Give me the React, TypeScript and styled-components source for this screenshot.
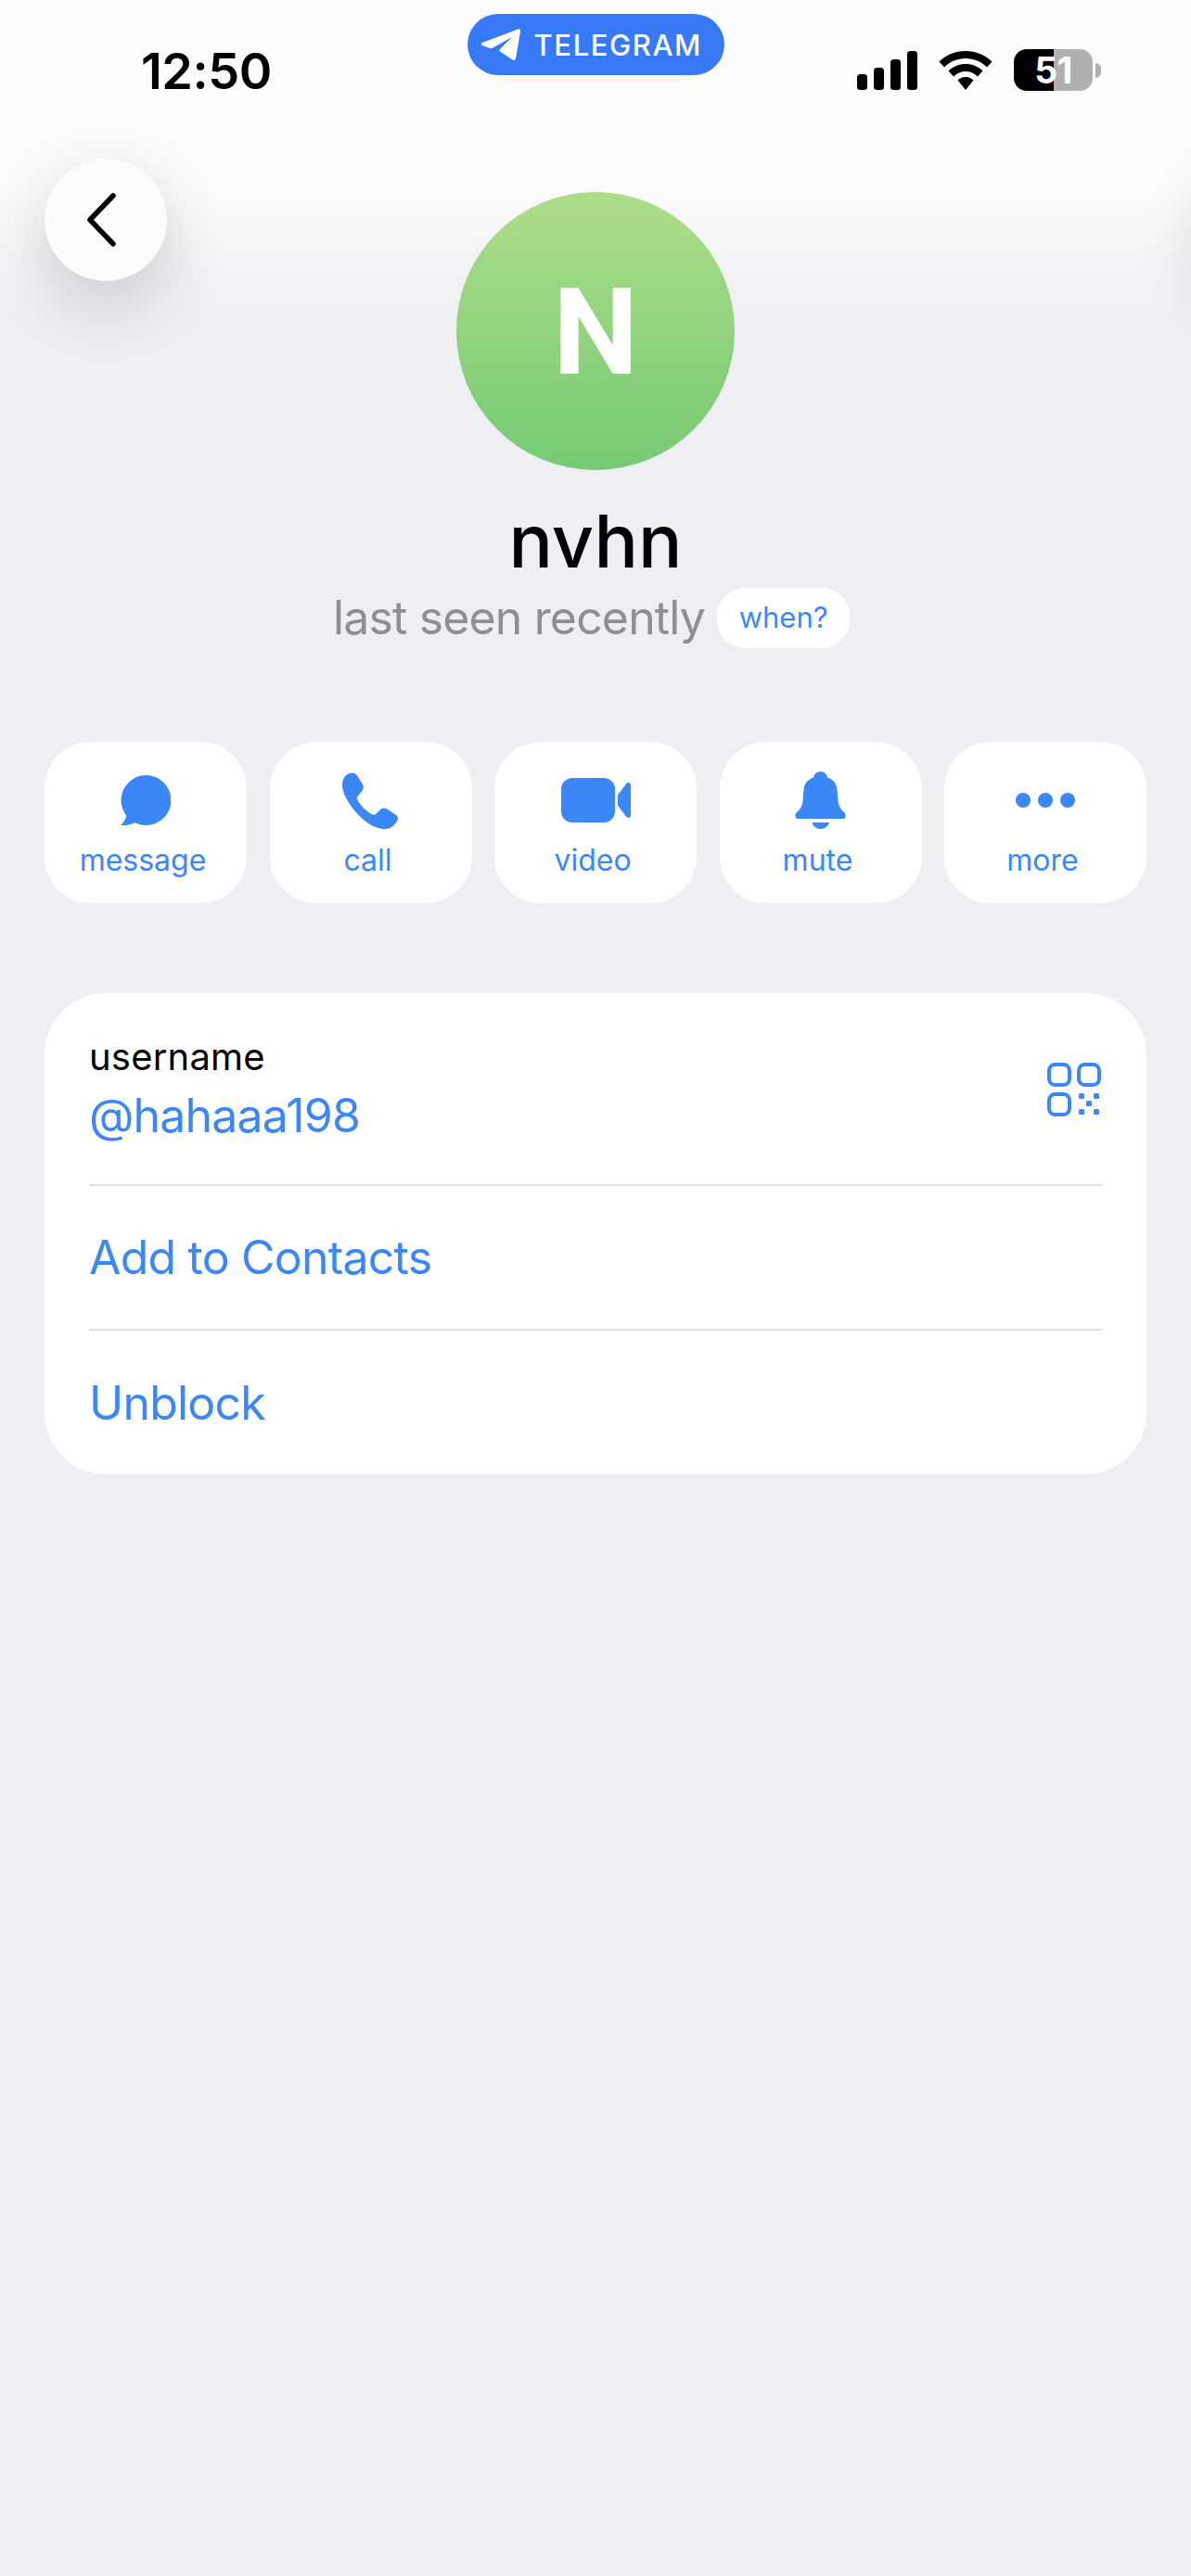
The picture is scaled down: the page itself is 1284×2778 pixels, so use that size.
import styled, { createGlobalStyle } from 'styled-components';

const BLUE = '#3b87f8';

const GlobalStyle = createGlobalStyle`
  html, body {
    margin: 0;
    padding: 0;
    background: #eeeef3;
    overflow: hidden;
  }
  * { box-sizing: border-box; }
`;

const Page = styled.div`
  position: relative;
  width: 1284px;
  height: 2778px;
  overflow: hidden;
  display: flex;
  flex-direction: column;
  align-items: center;
  font-family: 'Inter', 'Liberation Sans', sans-serif;
  background: linear-gradient(#fcfcfc 0, #fbfbfc 205px, #f5f5f8 270px, #eeeef3 340px);
`;

const StatusBar = styled.div`
  width: 100%;
  height: 207px;
  display: grid;
  grid-template-columns: 1fr auto 1fr;
  align-items: start;
`;

const Time = styled.div`
  padding: 45px 0 0 152px;
  font-size: 54px;
  line-height: 64px;
  font-weight: 600;
  letter-spacing: -0.5px;
  color: #000;
`;

const AppPill = styled.div`
  margin-top: 15px;
  width: 277px;
  height: 66px;
  border-radius: 33px;
  background: #3779f7;
  display: flex;
  align-items: center;
  gap: 15px;
  padding-left: 15px;
  color: #fff;
  font-size: 31px;
  font-weight: 500;
  letter-spacing: 1.6px;
`;

const StatusIcons = styled.div`
  padding: 53px 97px 0 0;
  display: flex;
  justify-content: flex-end;
  align-items: center;
`;

const Battery = styled.div`
  margin-left: 23px;
  width: 85px;
  height: 45px;
  border-radius: 14px;
  background: linear-gradient(90deg, #000 0 43px, #b0b0b0 43px);
  color: #fff;
  font-size: 39px;
  font-weight: 700;
  display: flex;
  align-items: center;
  justify-content: center;
  letter-spacing: -0.5px;
`;

const BatteryNub = styled.div`
  margin-left: 3px;
  width: 6px;
  height: 16px;
  border-radius: 0 8px 8px 0;
  background: #b0b0b0;
`;

const RoundButton = styled.div<{ $left: number }>`
  position: absolute;
  top: 171px;
  left: ${p => p.$left}px;
  width: 132px;
  height: 132px;
  border-radius: 50%;
  background: #fbfbfc;
  box-shadow: 0 24px 70px rgba(0, 0, 0, 0.17);
  display: flex;
  align-items: center;
  justify-content: center;
`;

const Avatar = styled.div`
  width: 300px;
  height: 300px;
  padding-top: 2px;
  border-radius: 50%;
  background: linear-gradient(#aedd8a, #76ca74);
  color: #fff;
  font-family: 'Roboto', 'Inter', sans-serif;
  font-size: 130px;
  font-weight: 700;
  display: flex;
  align-items: center;
  justify-content: center;
`;

const Name = styled.div`
  margin-top: 31px;
  font-size: 79px;
  line-height: 90px;
  font-weight: 500;
  color: #000;
`;

const Presence = styled.div`
  margin-top: 5px;
  padding-right: 9px;
  display: flex;
  align-items: center;
  gap: 13px;
  font-size: 50px;
  line-height: 66px;
  letter-spacing: -0.85px;
  color: #8e8e93;
`;

const WhenPill = styled.div`
  width: 143px;
  height: 65px;
  border-radius: 30px;
  background: #fff;
  color: ${BLUE};
  font-size: 31px;
  letter-spacing: 0;
  display: flex;
  align-items: center;
  justify-content: center;
`;

const Actions = styled.div`
  margin-top: 101px;
  width: 1188px;
  display: grid;
  grid-template-columns: repeat(5, 218px);
  justify-content: space-between;
`;

const ActionButton = styled.div`
  height: 174px;
  border-radius: 50px;
  background: #fff;
  display: flex;
  flex-direction: column;
  align-items: center;
  color: ${BLUE};
`;

const ActionIcon = styled.div`
  height: 108px;
  padding-top: 18px;
  display: flex;
  align-items: center;
  justify-content: center;
`;

const ActionLabel = styled.div`
  padding-right: 6px;
  font-size: 32px;
  line-height: 40px;
`;

const Card = styled.div`
  margin-top: 97px;
  width: 1188px;
  border-radius: 66px;
  background: #fff;
  padding: 0 48px;
`;

const UsernameRow = styled.div`
  height: 206px;
  padding-top: 44px;
  display: flex;
  justify-content: space-between;
  align-items: flex-start;
`;

const FieldLabel = styled.div`
  font-size: 40px;
  line-height: 50px;
  letter-spacing: 0.2px;
  color: #000;
`;

const LinkText = styled.div`
  font-size: 50px;
  line-height: 66px;
  letter-spacing: -0.8px;
  color: ${BLUE};
`;

const UsernameValue = styled(LinkText)`
  margin-top: 5px;
`;

const QrSlot = styled.div`
  padding: 31px 1px 0 0;
`;

const LinkRow = styled.div<{ $tall?: boolean }>`
  border-top: 2px solid #e0e0e3;
  height: ${p => (p.$tall ? 157 : 156)}px;
  display: flex;
  align-items: center;
`;

const Signal = () => (
  <svg width="65" height="42" viewBox="0 0 65 42" fill="#000">
    <rect x="0" y="25" width="11" height="17" rx="3.5" />
    <rect x="18" y="18" width="11" height="24" rx="3.5" />
    <rect x="36" y="9" width="11" height="33" rx="3.5" />
    <rect x="54" y="0" width="11" height="42" rx="3.5" />
  </svg>
);

const Wifi = () => (
  <svg width="58" height="42" viewBox="0 0 58 42" fill="#000" style={{ marginLeft: 23 }}>
    <path d="M29 0C18 0 8.500 4 .5 11.500L6 17.500C12 11.500 20 8 29 8S46 11.500 52 17.500L57.500 11.500C49.500 4 40 0 29 0Z" />
    <path d="M29 14C22 14 15.500 16.500 10.500 21.500L16 27.500C19.500 24 24 22 29 22S38.500 24 42 27.500L47.500 21.500C42.500 16.500 36 14 29 14Z" />
    <path d="M29 28C26 28 23 29 20.500 31.500L29 42 37.500 31.500C35 29 32 28 29 28Z" />
  </svg>
);

const PlaneLogo = () => (
  <svg width="42" height="34" viewBox="0 0 42 34" fill="#fff">
    <path d="M1 15L39.500 .5C41 0 42.500 1 42 3L37 32C36.500 34 35 34.500 33.500 33.500L20 24.500C19 23.500 19 23 20 22L33 9 12 20.800C11 21.300 10 21.300 9 21L1 18C-.3 17.500-.3 15.500 1 15Z" />
  </svg>
);

const Chevron = () => (
  <svg width="33" height="58" viewBox="0 0 33 58" fill="none" stroke="#000" strokeWidth="5.500" strokeLinecap="round" strokeLinejoin="round" style={{ marginLeft: -10 }}>
    <path d="M29 3L4 29 29 55" />
  </svg>
);

const MessageIcon = () => (
  <svg width="54" height="54" viewBox="0 0 54 54" fill={BLUE}>
    <circle cx="27.500" cy="27" r="27" />
    <path d="M6 38C7 43 6 49 0 54 7 54.500 13 53 17 50Z" />
  </svg>
);

const PhoneIcon = () => (
  <svg width="61" height="61" viewBox="0 0 61 61" fill={BLUE}>
    <path d="M11 .5C13.500 .5 15 2 16 3.500L21.500 12C23.500 15 23 18 21 20.500L16.500 26C15.500 27.200 15.500 28 16 29C19 35 26 42.500 33 45.500C34 46 35 46 36 45L40.500 40.500C43 38 46 38 48.500 39.500L58 46C60 47.500 60.500 49.500 59.500 51.500C57 57 52 61 46 61C35 61 23 53 14 42C5 31 0 22 0 13C0 7 4 .5 11 .5Z" />
  </svg>
);

const VideoIcon = () => (
  <svg width="75" height="48" viewBox="0 0 75 48" fill={BLUE}>
    <rect x="0" y="0" width="58" height="48" rx="12" />
    <path d="M62 17L70 6.500C72 4 75 5 75 8V40C75 43 72 44 70 41.500L62 31C61 29.800 61 29 61 28V20C61 19 61 18.200 62 17Z" />
  </svg>
);

const BellIcon = () => (
  <svg width="55" height="62" viewBox="0 0 55 62" fill={BLUE}>
    <path d="M27.500 0C31.500 0 34.500 3 35 6.500C41 8.500 45 12.500 45.500 20L46.500 31C47 37 49 40.500 53 44C55.500 46.500 55 51 52 51H3C0 51-.5 46.500 2 44C6 40.500 8 37 8.500 31L9.500 20C10 12.500 14 8.500 20 6.500C20.500 3 23.500 0 27.500 0Z" />
    <path d="M18.500 55H37C36 59 32 62 27.500 62C23 62 19.500 59 18.500 55Z" />
  </svg>
);

const DotsIcon = () => (
  <svg width="64" height="16" viewBox="0 0 64 16" fill={BLUE}>
    <circle cx="8" cy="8" r="8" />
    <circle cx="32" cy="8" r="8" />
    <circle cx="56" cy="8" r="8" />
  </svg>
);

const QrIcon = () => (
  <svg width="58" height="58" viewBox="0 0 58 58" fill="none" stroke={BLUE} strokeWidth="4">
    <rect x="2" y="2" width="22" height="22" rx="6.500" />
    <rect x="34" y="2" width="22" height="22" rx="6.500" />
    <rect x="2" y="34" width="22" height="22" rx="6.500" />
    <g fill={BLUE} stroke="none">
      <rect x="34" y="33" width="6" height="6" rx="1.500" />
      <rect x="50" y="33" width="6" height="6" rx="1.500" />
      <rect x="42" y="41" width="6" height="6" rx="1.500" />
      <rect x="34" y="50" width="6" height="6" rx="1.500" />
      <rect x="50" y="50" width="6" height="6" rx="1.500" />
    </g>
  </svg>
);

const actions = [
  { label: 'message', icon: <MessageIcon /> },
  { label: 'call', icon: <PhoneIcon /> },
  { label: 'video', icon: <VideoIcon /> },
  { label: 'mute', icon: <BellIcon /> },
  { label: 'more', icon: <DotsIcon /> },
];

export default function App() {
  return (
    <Page>
      <GlobalStyle />
      <StatusBar>
        <Time>12:50</Time>
        <AppPill>
          <PlaneLogo />
          TELEGRAM
        </AppPill>
        <StatusIcons>
          <Signal />
          <Wifi />
          <Battery>51</Battery>
          <BatteryNub />
        </StatusIcons>
      </StatusBar>

      <RoundButton $left={48}>
        <Chevron />
      </RoundButton>
      <RoundButton $left={1296} />

      <Avatar>N</Avatar>
      <Name>nvhn</Name>
      <Presence>
        last seen recently
        <WhenPill>when?</WhenPill>
      </Presence>

      <Actions>
        {actions.map(action => (
          <ActionButton key={action.label}>
            <ActionIcon>{action.icon}</ActionIcon>
            <ActionLabel>{action.label}</ActionLabel>
          </ActionButton>
        ))}
      </Actions>

      <Card>
        <UsernameRow>
          <div>
            <FieldLabel>username</FieldLabel>
            <UsernameValue>@hahaaa198</UsernameValue>
          </div>
          <QrSlot>
            <QrIcon />
          </QrSlot>
        </UsernameRow>
        <LinkRow>
          <LinkText>Add to Contacts</LinkText>
        </LinkRow>
        <LinkRow $tall>
          <LinkText>Unblock</LinkText>
        </LinkRow>
      </Card>
    </Page>
  );
}
